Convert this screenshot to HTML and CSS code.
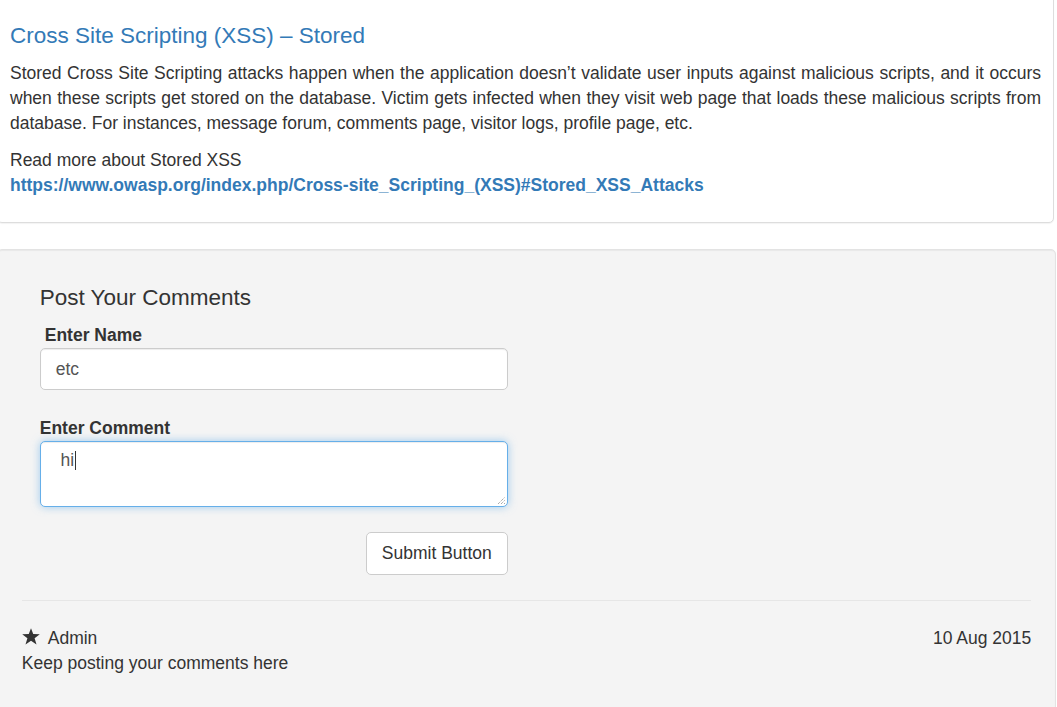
FILE: index.html
```html
<!DOCTYPE html>
<html>
<head>
<meta charset="utf-8">
<link rel="stylesheet" href="styles.css">
</head>
<body>
<div class="page">
  <div class="panel">
    <h4 class="panel-title">Cross Site Scripting (XSS) – Stored</h4>
    <p class="desc">Stored Cross Site Scripting attacks happen when the application doesn’t validate user inputs against malicious scripts, and it occurs when these scripts get stored on the database. Victim gets infected when they visit web page that loads these malicious scripts from database. For instances, message forum, comments page, visitor logs, profile page, etc.</p>
    <p class="more">Read more about Stored XSS<br><a class="link" href="#">https://www.owasp.org/index.php/Cross-site_Scripting_(XSS)#Stored_XSS_Attacks</a></p>
  </div>
  <div class="well">
    <form class="comment-form">
      <h4 class="form-title">Post Your Comments</h4>
      <div class="group">
        <label class="label label-name">Enter Name</label>
        <div class="control">etc</div>
      </div>
      <div class="group">
        <label class="label">Enter Comment</label>
        <div class="control textarea">&nbsp;hi<span class="caret"></span>
          <svg class="grip" width="9" height="9" viewBox="0 0 9 9"><path d="M1 8 L8 1 M4 8 L8 4 M7 8 L8 7" stroke="#888" stroke-width="1" stroke-dasharray="1 1"/></svg>
        </div>
      </div>
      <div class="actions">
        <button type="button" class="btn">Submit Button</button>
      </div>
    </form>
    <hr class="rule">
    <div class="comment">
      <div class="comment-head">
        <span class="author"><svg class="star" width="18" height="17" viewBox="0 0 17 16"><path d="M8.5 0.2 L10.6 5.7 L16.8 5.9 L11.9 9.6 L13.7 15.6 L8.5 12 L3.3 15.6 L5.1 9.6 L0.2 5.9 L6.4 5.7 Z" fill="#333"/></svg>Admin</span>
        <span class="date">10 Aug 2015</span>
      </div>
      <div class="comment-body">Keep posting your comments here</div>
    </div>
  </div>
</div>
</body>
</html>
```
FILE: styles.css
```css
html, body {
  margin: 0;
  padding: 0;
  background: #fff;
}
body {
  font-family: "Liberation Sans", Arial, sans-serif;
  font-size: 17.5px;
  line-height: 25px;
  color: #333;
  overflow: hidden;
}
.page {
  margin-left: -3px;
  width: 1059px;
}
.panel {
  margin: -8px 2px 0 0;
  border: 1px solid #ddd;
  border-radius: 5px;
  padding: 18px 12px 11px 12px;
  background: #fff;
  box-shadow: 0 1px 1px rgba(0,0,0,0.05);
}
.panel-title {
  margin: 12.5px 0 12.5px;
  font-size: 22.5px;
  line-height: 1.1;
  font-weight: 500;
  color: #337ab7;
}
.desc {
  margin: 0 0 12.5px;
  text-align: justify;
}
.more {
  margin: 0 0 12.5px;
}
.link {
  color: #337ab7;
  font-weight: bold;
  text-decoration: none;
}
.well {
  margin-top: 26px;
  background: #f4f4f4;
  border: 1px solid #e3e3e3;
  border-radius: 5px;
  padding: 23.75px 23.75px 20px;
  box-shadow: inset 0 1px 1px rgba(0,0,0,0.05);
  min-height: 420px;
}
.comment-form {
  width: 468px;
  margin-left: 18px;
}
.form-title {
  margin: 12.5px 0 12.5px;
  font-size: 22.5px;
  line-height: 1.1;
  font-weight: 500;
  color: #333;
}
.group {
  margin-bottom: 25.5px;
}
.label {
  display: block;
  font-weight: bold;
}
.label-name {
  padding-left: 5px;
}
.control {
  box-sizing: border-box;
  height: 42px;
  border: 1px solid #ccc;
  border-radius: 5px;
  background: #fff;
  padding: 7.5px 15px;
  color: #555;
  box-shadow: inset 0 1px 1px rgba(0,0,0,0.075);
}
.textarea {
  position: relative;
  height: 66px;
  padding-top: 6px;
  border-color: #66afe9;
  box-shadow: inset 0 1px 1px rgba(0,0,0,0.075), 0 0 8px rgba(102,175,233,0.6);
}
.caret {
  display: inline-block;
  width: 1px;
  height: 19px;
  background: #333;
  vertical-align: -4px;
  margin-left: 1px;
}
.grip {
  position: absolute;
  right: 1px;
  bottom: 1px;
}
.actions {
  display: flex;
  justify-content: flex-end;
  margin-top: 2.5px;
}
.btn {
  box-sizing: border-box;
  height: 42.5px;
  padding: 7.5px 15px;
  font-family: inherit;
  font-size: 17.5px;
  line-height: 25px;
  color: #333;
  background: #fff;
  border: 1px solid #ccc;
  border-radius: 5px;
}
.rule {
  margin: 25px 0 25px;
  border: 0;
  border-top: 1px solid #e6e6e6;
}
.comment-head {
  display: flex;
  justify-content: space-between;
}
.author {
  display: flex;
  align-items: center;
}
.star {
  margin-right: 8px;
  margin-top: -3px;
}
```
